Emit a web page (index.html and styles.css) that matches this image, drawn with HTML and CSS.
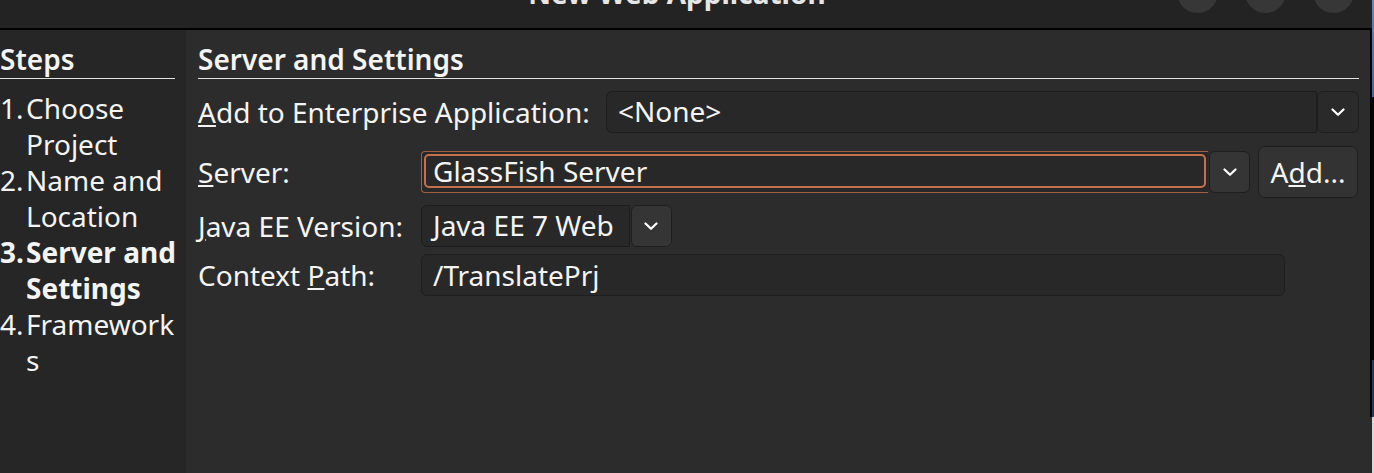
FILE: index.html
```html
<!DOCTYPE html>
<html lang="en">

<head>
    <meta charset="UTF-8">
    <meta name="viewport" content="width=device-width, initial-scale=1.0">
    <title>New Web Application</title>
    <link rel="stylesheet" href="styles.css">
</head>

<body>
    <div class="screen">
        <div class="window">
            <header class="titlebar">
                <span></span>
                <h1 class="title">New Web Application</h1>
                <div class="controls">
                    <span class="control"></span>
                    <span class="control"></span>
                    <span class="control"></span>
                </div>
            </header>

            <div class="content">
                <!-- Wizard steps -->
                <aside class="steps">
                    <h2 class="section-title">Steps</h2>
                    <ol class="step-list">
                        <li><span class="step-num">1.</span><span class="step-name">Choose Project</span></li>
                        <li><span class="step-num">2.</span><span class="step-name">Name and Location</span></li>
                        <li class="current"><span class="step-num">3.</span><span class="step-name">Server and Settings</span></li>
                        <li><span class="step-num">4.</span><span class="step-name">Frameworks</span></li>
                    </ol>
                </aside>

                <!-- Server and Settings page -->
                <main class="panel">
                    <h2 class="section-title">Server and Settings</h2>

                    <div class="row-wide">
                        <label class="field-label"><u>A</u>dd to Enterprise Application:</label>
                        <div class="combo combo-flat">
                            <div class="combo-field">&lt;None&gt;</div>
                            <button type="button" class="combo-btn">
                                <svg width="14" height="9" viewBox="0 0 14 9"><polyline points="1.5,1.5 7,6.8 12.5,1.5" fill="none" stroke="#fff" stroke-width="2.2" stroke-linecap="round" stroke-linejoin="round"/></svg>
                            </button>
                        </div>
                    </div>

                    <div class="form-grid">
                        <label class="field-label"><u>S</u>erver:</label>
                        <div class="server-cell">
                            <div class="combo combo-grow">
                                <div class="combo-field focused"><span class="focus-ring">GlassFish Server</span></div>
                                <button type="button" class="combo-btn">
                                    <svg width="14" height="9" viewBox="0 0 14 9"><polyline points="1.5,1.5 7,6.8 12.5,1.5" fill="none" stroke="#fff" stroke-width="2.2" stroke-linecap="round" stroke-linejoin="round"/></svg>
                                </button>
                            </div>
                            <button type="button" class="push-btn">A<u>d</u>d...</button>
                        </div>

                        <label class="field-label"><u>J</u>ava EE Version:</label>
                        <div class="combo combo-auto">
                            <div class="combo-field">Java EE 7 Web</div>
                            <button type="button" class="combo-btn">
                                <svg width="14" height="9" viewBox="0 0 14 9"><polyline points="1.5,1.5 7,6.8 12.5,1.5" fill="none" stroke="#fff" stroke-width="2.2" stroke-linecap="round" stroke-linejoin="round"/></svg>
                            </button>
                        </div>

                        <label class="field-label">Context <u>P</u>ath:</label>
                        <input type="text" class="text-field" value="/TranslatePrj">
                    </div>
                </main>
            </div>
        </div>
        <div class="edge"></div>
    </div>
</body>

</html>
```

FILE: styles.css
```css
body {
    margin: 0;
    padding: 0;
    background-color: #2c2c2c;
    font-family: 'Noto Sans', 'DejaVu Sans', sans-serif;
    font-size: 28px;
    line-height: 36px;
    color: #f4f4f4;
    overflow: hidden;
}

.screen {
    display: flex;
    height: 473px;
}

.window {
    width: 1370px;
    display: flex;
    flex-direction: column;
}

.titlebar {
    height: 28px;
    overflow: hidden;
    background-color: #232323;
    border-bottom: 2px solid #000;
    display: grid;
    grid-template-columns: 1fr auto 1fr;
    align-items: start;
}

.title {
    margin: -25px 16px 0 0;
    font-size: 28px;
    font-weight: 700;
    line-height: 36px;
    color: #e6e6e6;
    white-space: nowrap;
}

.controls {
    justify-self: end;
    display: flex;
    gap: 27px;
    margin-top: -28px;
    padding-right: 16px;
}

.control {
    width: 41px;
    height: 41px;
    border-radius: 50%;
    background-color: #373737;
}

.content {
    flex: 1;
    display: flex;
}

.steps {
    width: 186px;
    background-color: #262626;
}

.section-title {
    margin: 11px 0 0;
    padding-bottom: 1px;
    font-size: 28px;
    font-weight: 600;
    line-height: 36px;
    border-bottom: 1px solid #e2e2e2;
}

.steps .section-title {
    margin-right: 11px;
}

.step-list {
    list-style: none;
    margin: 11px 0 0;
    padding: 0;
}

.step-list li {
    display: grid;
    grid-template-columns: 26px 1fr;
}

.step-name {
    overflow-wrap: anywhere;
}

.step-list li.current {
    font-weight: 700;
}

.panel {
    flex: 1;
    padding: 0 11px 0 12px;
}

.field-label {
    white-space: nowrap;
}

.field-label u,
.push-btn u {
    text-decoration-thickness: 1.5px;
    text-underline-offset: 2px;
}

.row-wide {
    display: grid;
    grid-template-columns: 408px 1fr;
    align-items: center;
    margin-top: 12px;
}

.form-grid {
    display: grid;
    grid-template-columns: 223px 1fr;
    align-items: center;
    row-gap: 7px;
    margin-top: 13px;
}

.combo {
    display: flex;
    height: 42px;
}

.combo-auto {
    justify-self: start;
}

.combo-auto .combo-field {
    padding-right: 15px;
}

.combo-grow {
    flex: 1;
}

.combo-field {
    box-sizing: border-box;
    height: 42px;
    padding: 1px 12px 0 11px;
    background-color: #282828;
    border: 1px solid #1c1c1c;
    border-radius: 6px 0 0 6px;
    white-space: nowrap;
}

.combo-flat .combo-field,
.combo-grow .combo-field {
    flex: 1;
}

.combo-btn {
    box-sizing: border-box;
    width: 41px;
    height: 42px;
    padding: 0;
    margin-left: 1px;
    background-color: #353535;
    border: 1px solid #1e1e1e;
    border-radius: 6px;
    display: flex;
    align-items: center;
    justify-content: center;
}

.combo-flat .combo-btn {
    width: 42px;
    margin-left: 0;
    background-color: #2a2a2a;
}

.combo-field.focused {
    padding: 2px;
    border: 1px solid #a25d42;
    border-right: none;
    border-radius: 4px 0 0 4px;
}

.focus-ring {
    display: block;
    box-sizing: border-box;
    height: 34px;
    padding: 0 0 0 7px;
    line-height: 30px;
    border: 2px solid #c4704e;
    border-radius: 5px;
}

.server-cell {
    display: flex;
    align-items: center;
    gap: 8px;
}

.push-btn {
    box-sizing: border-box;
    width: 100px;
    height: 52px;
    padding: 0;
    margin-right: 1px;
    font-family: inherit;
    font-size: 28px;
    color: #f4f4f4;
    background-color: #333333;
    border: 1px solid #1d1d1d;
    border-radius: 7px;
}

.text-field {
    box-sizing: border-box;
    width: 864px;
    height: 42px;
    padding: 0 11px;
    font-family: inherit;
    font-size: 28px;
    color: #f4f4f4;
    background-color: #282828;
    border: 1px solid #1e1e1e;
    border-radius: 6px;
    outline: none;
}

.edge {
    width: 4px;
    background:
        linear-gradient(to bottom, #232323 0, #232323 28px, #000 28px, #000 417px, #2c2c2c 417px) left top / 2px 100% no-repeat,
        linear-gradient(to bottom, #5b8bc0 0, #3a6aa2 97px, #060606 97px, #060606 360px, #1b3c6c 360px, #1b3c6c 417px, #d6d6d6 417px) right top / 2px 100% no-repeat;
}
```
